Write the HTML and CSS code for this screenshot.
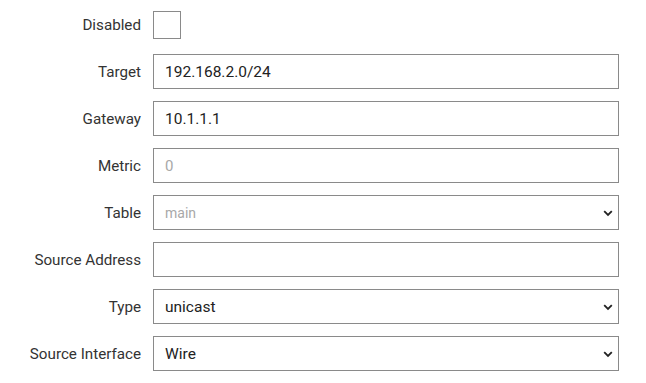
FILE: index.html
```html
<!DOCTYPE html>
<html lang="en">
<head>
  <meta charset="UTF-8">
  <title>Static Route</title>
  <link rel="stylesheet" href="styles.css">
</head>
<body>
  <form class="route-form">
    <label class="field-label" for="disabled">Disabled</label>
    <div class="field"><input type="checkbox" id="disabled" class="check"></div>

    <label class="field-label" for="target">Target</label>
    <div class="field"><input type="text" id="target" class="text-input" value="192.168.2.0/24"></div>

    <label class="field-label" for="gateway">Gateway</label>
    <div class="field"><input type="text" id="gateway" class="text-input" value="10.1.1.1"></div>

    <label class="field-label" for="metric">Metric</label>
    <div class="field"><input type="text" id="metric" class="text-input" placeholder="0"></div>

    <label class="field-label" for="table">Table</label>
    <div class="field select-wrap">
      <select id="table" class="select-input placeholder">
        <option>main</option>
      </select>
      <svg class="chevron" width="10" height="7" viewBox="0 0 10 7"><path d="M1.2 1.2 L5 5 L8.8 1.2" fill="none" stroke="#222" stroke-width="1.8"/></svg>
    </div>

    <label class="field-label" for="srcaddr">Source Address</label>
    <div class="field"><input type="text" id="srcaddr" class="text-input"></div>

    <label class="field-label" for="type">Type</label>
    <div class="field select-wrap">
      <select id="type" class="select-input">
        <option>unicast</option>
      </select>
      <svg class="chevron" width="10" height="7" viewBox="0 0 10 7"><path d="M1.2 1.2 L5 5 L8.8 1.2" fill="none" stroke="#222" stroke-width="1.8"/></svg>
    </div>

    <label class="field-label" for="srcif">Source Interface</label>
    <div class="field select-wrap">
      <select id="srcif" class="select-input">
        <option>Wire</option>
      </select>
      <svg class="chevron" width="10" height="7" viewBox="0 0 10 7"><path d="M1.2 1.2 L5 5 L8.8 1.2" fill="none" stroke="#222" stroke-width="1.8"/></svg>
    </div>
  </form>
</body>
</html>
```

FILE: styles.css
```css
body {
  margin: 0;
  padding: 0;
  background: #fff;
  font-family: Roboto, "Liberation Sans", sans-serif;
  font-size: 15px;
  color: #333;
}
.route-form {
  display: grid;
  grid-template-columns: 141px 466px;
  grid-auto-rows: 35px;
  column-gap: 12px;
  row-gap: 12px;
  padding-top: 7px;
}
.field-label {
  display: flex;
  align-items: center;
  justify-content: flex-end;
  color: #333;
  font-size: 15.2px;
}
.field {
  display: flex;
  align-items: center;
}
.check {
  -webkit-appearance: none;
  appearance: none;
  width: 28px;
  height: 28px;
  margin: 0;
  border: 1px solid #8a8a8a;
  background: #fff;
  box-sizing: border-box;
}
.text-input,
.select-input {
  width: 100%;
  height: 35px;
  box-sizing: border-box;
  margin: 0;
  padding: 0 11px;
  border: 1px solid #8a8a8a;
  border-radius: 0;
  background: #fff;
  font-family: inherit;
  font-size: 15.5px;
  color: #222;
  outline: none;
}
.text-input::placeholder {
  color: #a8a8a8;
  font-size: 15px;
}
.select-input {
  -webkit-appearance: none;
  appearance: none;
}
.select-input.placeholder {
  color: #a8a8a8;
  font-size: 14px;
}
.select-wrap {
  position: relative;
}
.chevron {
  position: absolute;
  right: 6px;
  top: 15px;
  pointer-events: none;
}
```
